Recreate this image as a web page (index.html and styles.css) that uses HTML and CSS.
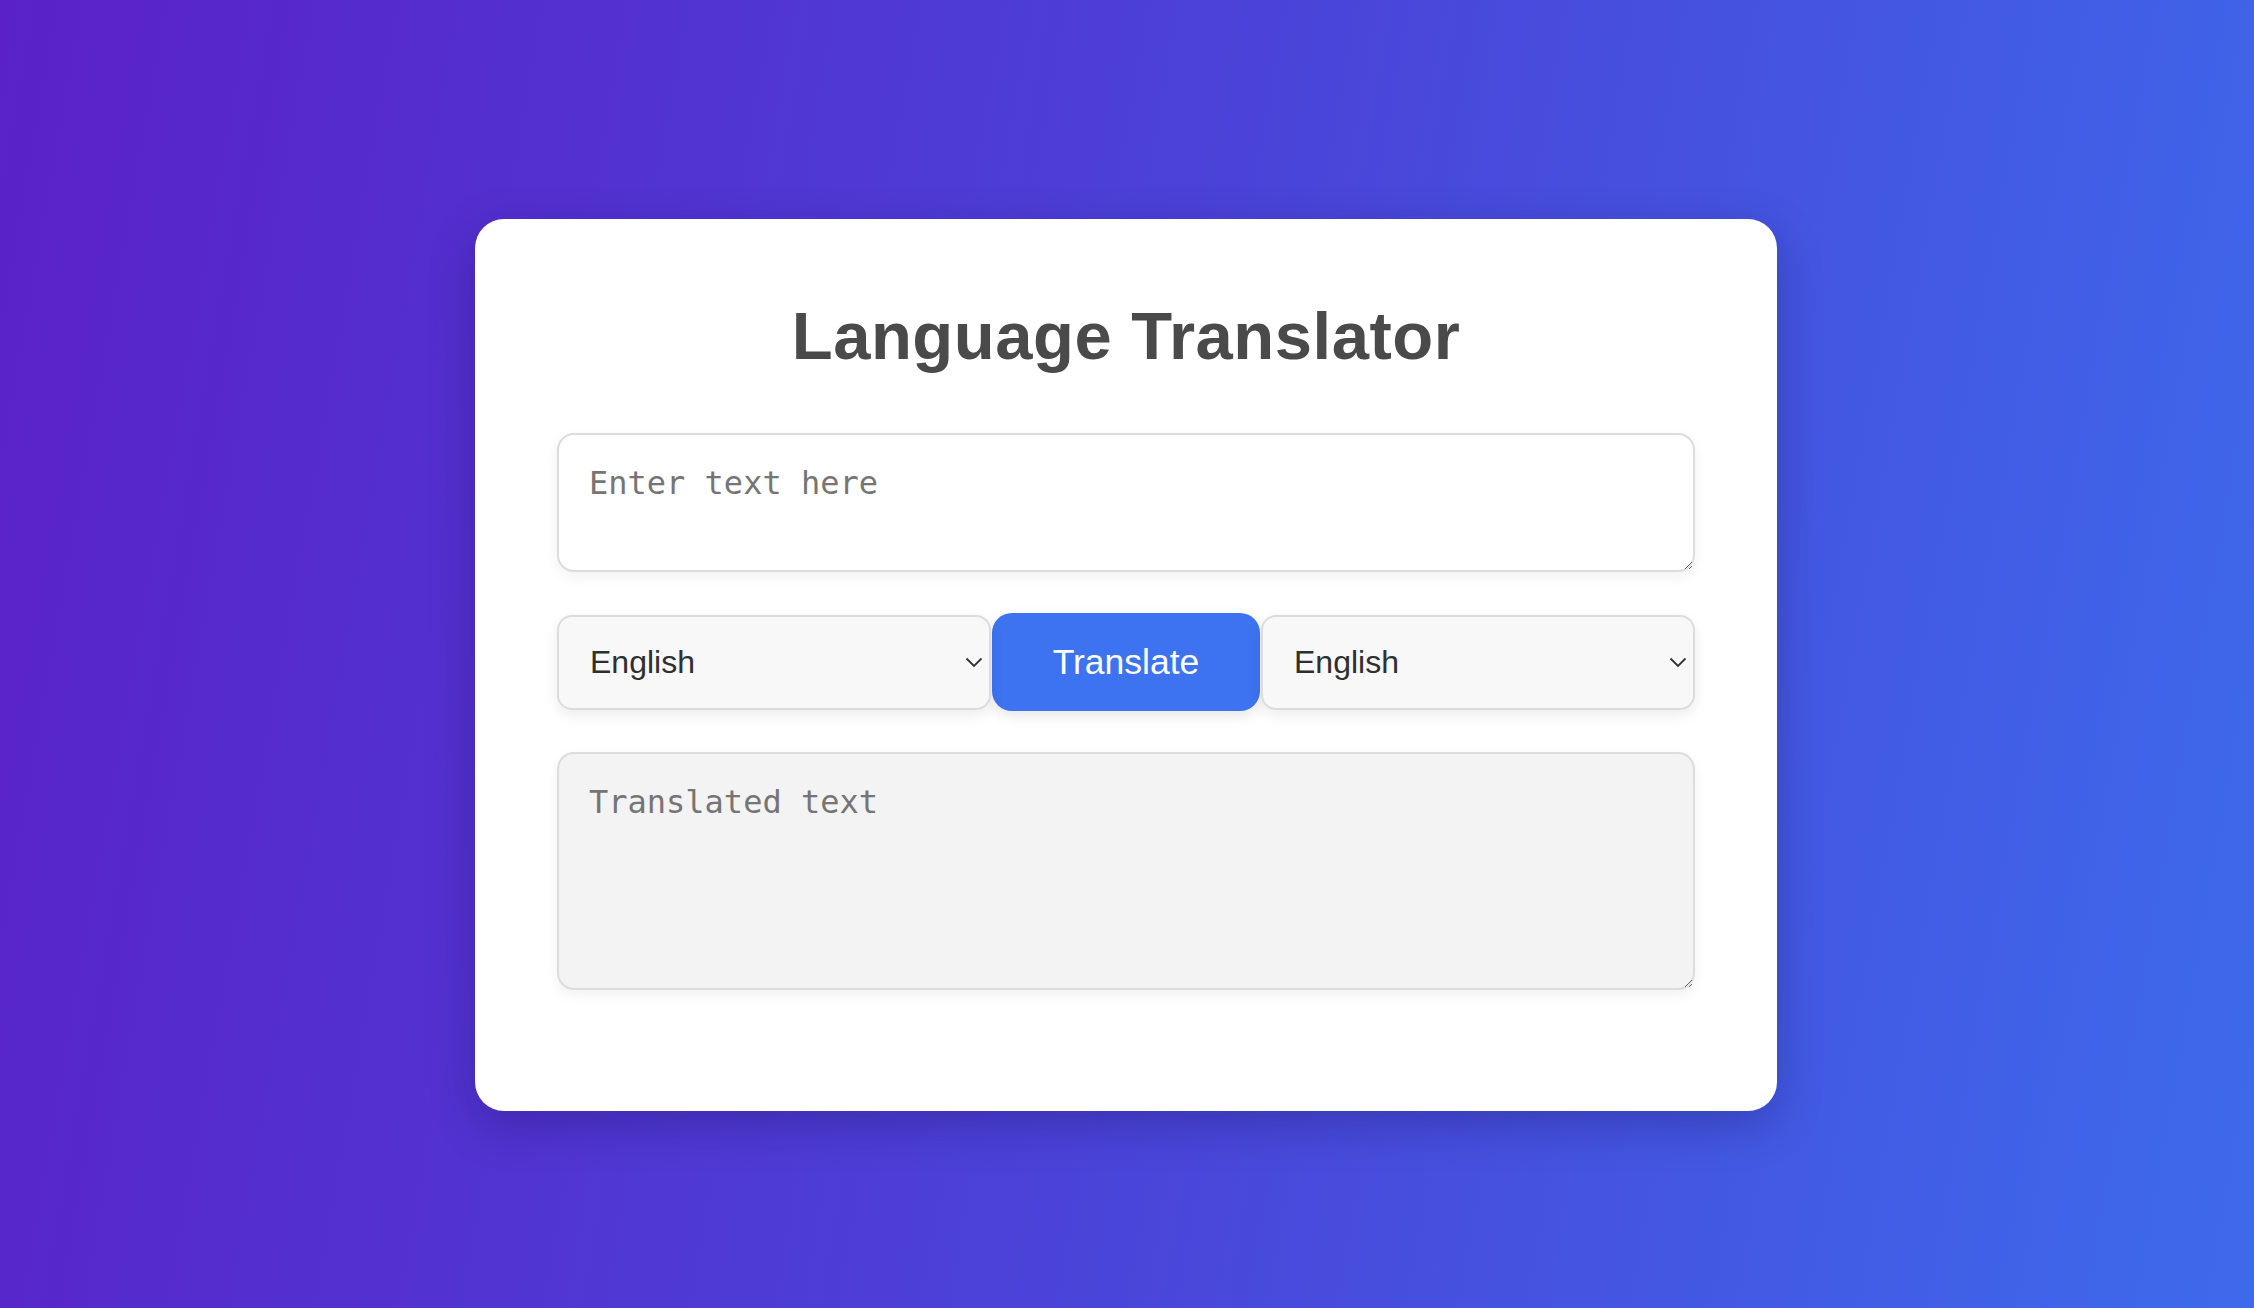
FILE: index.html
```html
<!DOCTYPE html>
<html lang="en">
<head>
<meta charset="utf-8">
<title>Language Translator</title>
<link rel="stylesheet" href="styles.css">
</head>
<body>
<main class="page">
  <section class="card">
    <h1 class="title">Language Translator</h1>
    <textarea class="input-text" rows="2" placeholder="Enter text here"></textarea>
    <div class="controls">
      <div class="select-wrap">
        <select class="lang-select">
          <option>English</option>
          <option>Spanish</option>
          <option>French</option>
        </select>
        <svg class="chevron" width="18" height="11" viewBox="0 0 18 11"><path d="M1.5 1.5 L9 9 L16.5 1.5" fill="none" stroke="#333" stroke-width="1.8"/></svg>
      </div>
      <button class="translate-btn" type="button">Translate</button>
      <div class="select-wrap">
        <select class="lang-select">
          <option>English</option>
          <option>Spanish</option>
          <option>French</option>
        </select>
        <svg class="chevron" width="18" height="11" viewBox="0 0 18 11"><path d="M1.5 1.5 L9 9 L16.5 1.5" fill="none" stroke="#333" stroke-width="1.8"/></svg>
      </div>
    </div>
    <textarea class="output-text" placeholder="Translated text" readonly></textarea>
  </section>
</main>
</body>
</html>
```

FILE: styles.css
```css
* {
  box-sizing: border-box;
}

html, body {
  margin: 0;
  padding: 0;
}

body {
  font-family: "Liberation Sans", Arial, sans-serif;
  background: linear-gradient(100deg, #5a21c8 0%, #4b42d8 50%, #3d6aeb 100%);
  min-height: 1308px;
}

.page {
  min-height: 1308px;
  display: flex;
  align-items: center;
  justify-content: center;
  padding: 22px 2px 0 0;
}

.card {
  width: 1302px;
  background: #ffffff;
  border-radius: 29px;
  padding: 81px 82px 121px;
  box-shadow: 0 14px 45px rgba(20, 10, 80, 0.28);
  display: flex;
  flex-direction: column;
}

.title {
  margin: 0 0 59px;
  height: 74px;
  font-size: 67px;
  line-height: 72px;
  font-weight: 700;
  letter-spacing: 0.5px;
  color: #4a4a4a;
  text-align: center;
}

.input-text,
.output-text {
  display: block;
  width: 100%;
  margin: 0;
  border: 2px solid #dcdcdc;
  border-radius: 17px;
  padding: 30px;
  font-family: "DejaVu Sans Mono", monospace;
  font-size: 32px;
  line-height: 37px;
  color: #333;
  box-shadow: 0 5px 14px rgba(0, 0, 0, 0.06);
  outline: none;
}

.input-text {
  height: 139px;
  background: #ffffff;
}

.output-text {
  height: 238px;
  background: #f3f3f3;
}

.input-text::placeholder,
.output-text::placeholder {
  color: #757575;
  opacity: 1;
}

.controls {
  display: flex;
  align-items: center;
  gap: 1px;
  margin: 41px 0;
  height: 98px;
}

.select-wrap {
  position: relative;
  flex: 1;
  height: 95px;
}

.lang-select {
  appearance: none;
  -webkit-appearance: none;
  width: 100%;
  height: 100%;
  border: 2px solid #dcdcdc;
  border-radius: 15px;
  background: #f8f8f8;
  padding: 0 40px 0 31px;
  font-family: "Liberation Sans", Arial, sans-serif;
  font-size: 32px;
  color: #2f2f2f;
  box-shadow: 0 5px 14px rgba(0, 0, 0, 0.08);
  outline: none;
}

.chevron {
  position: absolute;
  right: 8px;
  top: 42px;
  pointer-events: none;
}

.translate-btn {
  width: 268px;
  height: 98px;
  border: none;
  border-radius: 20px;
  background: #3d73f0;
  color: #ffffff;
  font-family: "Liberation Sans", Arial, sans-serif;
  font-size: 35.5px;
  padding: 0;
  box-shadow: 0 5px 14px rgba(0, 0, 0, 0.1);
  cursor: pointer;
}
```
